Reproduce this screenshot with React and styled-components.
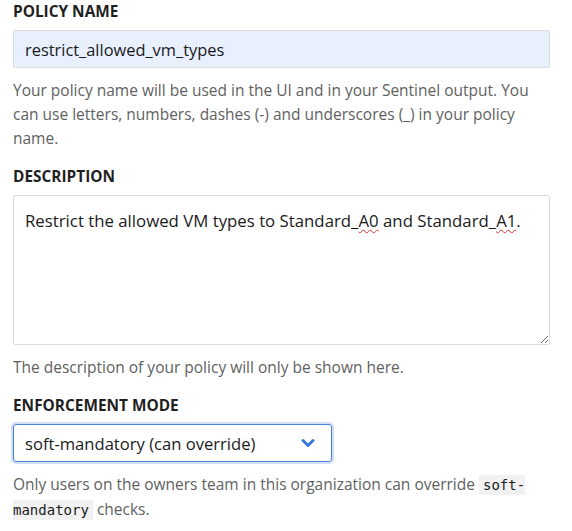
import React from "react";
import styled, { createGlobalStyle } from "styled-components";

const Global = createGlobalStyle`
  html, body { margin: 0; padding: 0; background: #fff; }
  body { font-family: "Open Sans", "Noto Sans", sans-serif; color: #333; }
`;

const Form = styled.form`
  display: flex;
  flex-direction: column;
  padding: 0 22px 0 13px;
  width: 572px;
  box-sizing: border-box;
`;

const Field = styled.div`
  display: flex;
  flex-direction: column;
  margin-top: ${(p) => p.$top || 0}px;
`;

const Label = styled.label`
  font-size: 15.4px;
  font-weight: 700;
  color: #1f1f1f;
  line-height: 24px;
  margin-bottom: 6px;
`;

const TextInput = styled.input`
  box-sizing: border-box;
  width: 537px;
  height: 38px;
  border: 1px solid #dcdcdc;
  border-radius: 2px;
  background: #e8f0fe;
  padding: 0 11px;
  font-family: inherit;
  font-size: 16.4px;
  color: #1a1a1a;
  outline: none;
`;

const Help = styled.p`
  margin: 10px 0 0;
  max-width: 525px;
  font-size: 15.5px;
  line-height: 24px;
  color: #5f5f5f;
`;

const TextArea = styled.div`
  box-sizing: border-box;
  width: 537px;
  height: 150px;
  border: 1px solid #dcdcdc;
  border-radius: 2px;
  padding: 13px 11px;
  font-size: 16.8px;
  line-height: 24px;
  color: #1a1a1a;
  resize: vertical;
  overflow: auto;
`;

const Misspelt = styled.span`
  text-decoration: underline wavy #e03030;
  text-decoration-thickness: 1px;
  text-underline-offset: 2px;
`;

const SelectBox = styled.div`
  box-sizing: border-box;
  width: 319px;
  height: 38px;
  border: 1px solid #4b7fd8;
  border-radius: 3px;
  box-shadow: 0 0 0 2px rgba(75, 127, 216, 0.25);
  display: flex;
  align-items: center;
  justify-content: space-between;
  padding: 0 16px 0 11px;
  font-size: 16.6px;
  color: #1a1a1a;
`;

const Code = styled.code`
  font-family: "DejaVu Sans Mono", "Liberation Mono", monospace;
  font-size: 14px;
  color: #1a1a1a;
  background: #f1f1f1;
  padding: 2px 4px;
`;

const Chevron = () => (
  <svg width="14" height="10" viewBox="0 0 14 10">
    <path d="M2 2.5 L7 7.5 L12 2.5" fill="none" stroke="#3a78d8" strokeWidth="3" strokeLinecap="round" strokeLinejoin="round" />
  </svg>
);

export default function App() {
  return (
    <>
      <Global />
      <Form>
        <Field>
          <Label>POLICY NAME</Label>
          <TextInput defaultValue="restrict_allowed_vm_types" />
          <Help>
            Your policy name will be used in the UI and in your Sentinel output. You can use letters,
            numbers, dashes (-) and underscores (_) in your policy name.
          </Help>
        </Field>
        <Field $top={15}>
          <Label>DESCRIPTION</Label>
          <TextArea role="textbox">
            Restrict the allowed VM types to Standard_<Misspelt>A0</Misspelt> and Standard_
            <Misspelt>A1</Misspelt>.
          </TextArea>
          <Help>The description of your policy will only be shown here.</Help>
        </Field>
        <Field $top={15}>
          <Label>ENFORCEMENT MODE</Label>
          <SelectBox>
            <span>soft-mandatory (can override)</span>
            <Chevron />
          </SelectBox>
          <Help>
            Only users on the owners team in this organization can override <Code>soft-mandatory</Code> checks.
          </Help>
        </Field>
      </Form>
    </>
  );
}
